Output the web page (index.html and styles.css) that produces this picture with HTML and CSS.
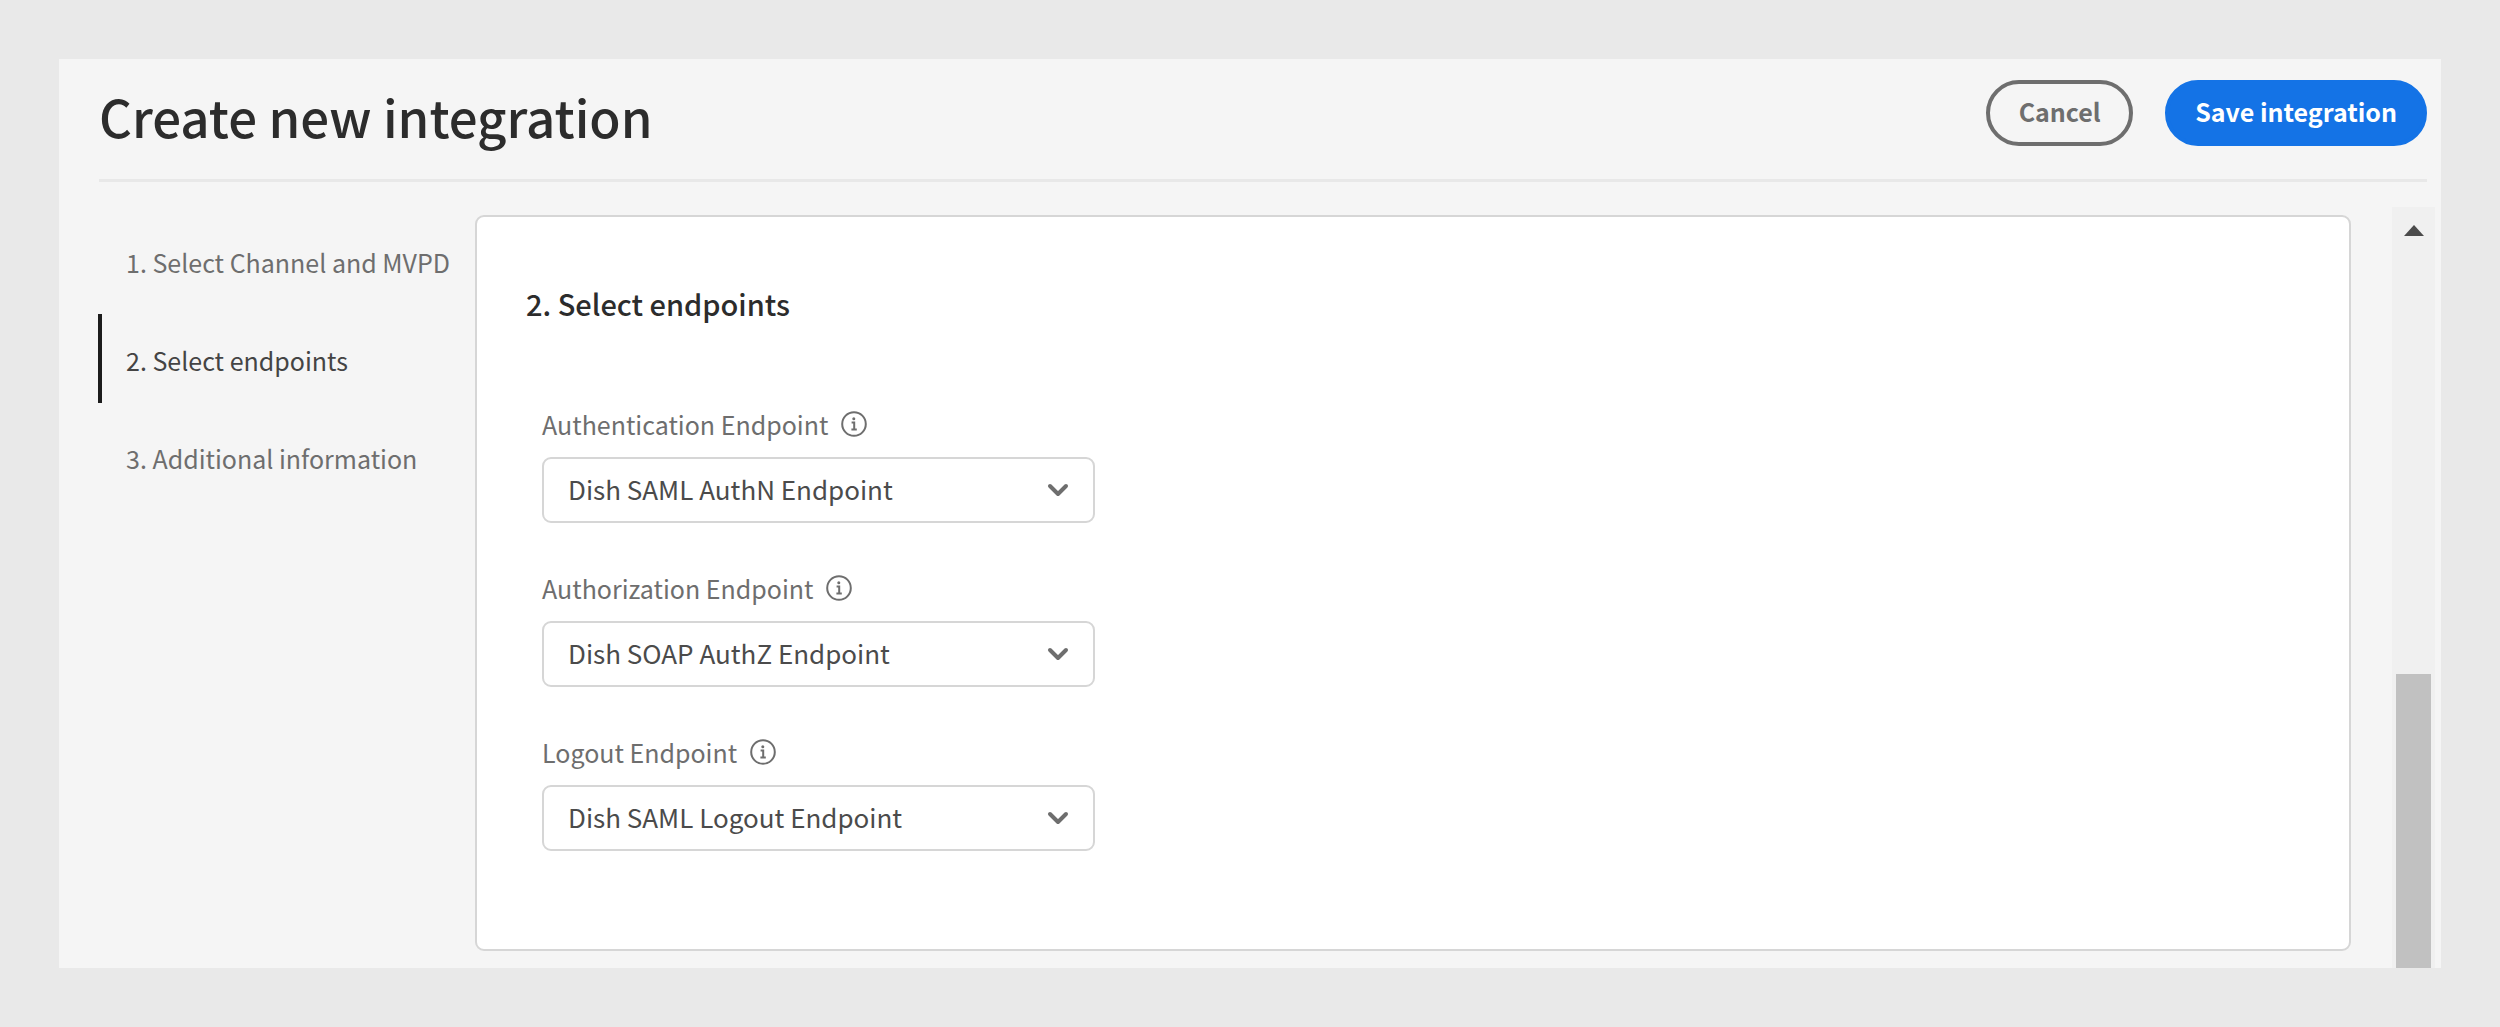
FILE: index.html
```html
<!DOCTYPE html>
<html lang="en">
<head>
<meta charset="utf-8">
<title>Create new integration</title>
<link rel="stylesheet" href="styles.css">
</head>
<body>
<div class="panel">
  <header class="header">
    <h1 class="title">Create new integration</h1>
    <div class="actions">
      <button class="button button-outline" type="button">Cancel</button>
      <button class="button button-primary" type="button">Save integration</button>
    </div>
  </header>
  <div class="content">
    <nav class="steps" aria-label="Steps">
      <a class="step" href="#channel">1. Select Channel and MVPD</a>
      <a class="step step-active" href="#endpoints" aria-current="step">2. Select endpoints</a>
      <a class="step" href="#additional">3. Additional information</a>
    </nav>
    <main class="card" id="endpoints">
      <h2 class="card-title">2. Select endpoints</h2>
      <form class="fields">
        <div class="field">
          <div class="field-head">
            <label for="authn">Authentication Endpoint</label>
            <svg class="info" viewBox="0 0 26 26" aria-hidden="true"><circle cx="13" cy="13" r="11.8"/><circle class="dot" cx="12.8" cy="7.8" r="1.5"/><path d="M10.6 11.4H13.2V18.2M10.4 18.4H15.8"/></svg>
          </div>
          <div class="picker">
            <select id="authn"><option>Dish SAML AuthN Endpoint</option></select>
            <svg class="chevron" viewBox="0 0 22 14" aria-hidden="true"><path d="M3 3L11 11L19 3"/></svg>
          </div>
        </div>
        <div class="field">
          <div class="field-head">
            <label for="authz">Authorization Endpoint</label>
            <svg class="info" viewBox="0 0 26 26" aria-hidden="true"><circle cx="13" cy="13" r="11.8"/><circle class="dot" cx="12.8" cy="7.8" r="1.5"/><path d="M10.6 11.4H13.2V18.2M10.4 18.4H15.8"/></svg>
          </div>
          <div class="picker">
            <select id="authz"><option>Dish SOAP AuthZ Endpoint</option></select>
            <svg class="chevron" viewBox="0 0 22 14" aria-hidden="true"><path d="M3 3L11 11L19 3"/></svg>
          </div>
        </div>
        <div class="field">
          <div class="field-head">
            <label for="logout">Logout Endpoint</label>
            <svg class="info" viewBox="0 0 26 26" aria-hidden="true"><circle cx="13" cy="13" r="11.8"/><circle class="dot" cx="12.8" cy="7.8" r="1.5"/><path d="M10.6 11.4H13.2V18.2M10.4 18.4H15.8"/></svg>
          </div>
          <div class="picker">
            <select id="logout"><option>Dish SAML Logout Endpoint</option></select>
            <svg class="chevron" viewBox="0 0 22 14" aria-hidden="true"><path d="M3 3L11 11L19 3"/></svg>
          </div>
        </div>
      </form>
    </main>
    <div class="scrollbar" aria-hidden="true">
      <svg class="scroll-up" viewBox="0 0 20 11"><path d="M10 0L20 11H0Z"/></svg>
      <div class="scroll-thumb"></div>
    </div>
  </div>
</div>
</body>
</html>
```
FILE: styles.css
```css
* {
  box-sizing: border-box;
}

body {
  margin: 0;
  padding: 59px;
  background: #e9e9e9;
  font-family: "Noto Sans CJK SC", "Noto Sans", sans-serif;
  font-size: 25px;
  line-height: 32px;
  color: #6e6e6e;
}

.panel {
  background: #f5f5f5;
}

.header {
  display: flex;
  justify-content: space-between;
  align-items: flex-start;
  margin: 0 14px 0 40px;
  padding: 21px 0 33px;
  border-bottom: 3px solid #e8e8e8;
}

.title {
  margin: 6px 0 0;
  font-size: 51px;
  line-height: 60px;
  font-weight: 500;
  color: #2c2c2c;
}

.actions {
  display: flex;
  gap: 32px;
}

.button {
  min-width: 147px;
  height: 66px;
  padding: 0 26px 4px;
  border: 4px solid #6e6e6e;
  border-radius: 33px;
  background: transparent;
  font: inherit;
  font-weight: 700;
  color: #6e6e6e;
}

.button-primary {
  border-color: #1473e6;
  background: #1473e6;
  color: #fff;
}

.content {
  display: flex;
  margin: 25px 6px 0 39px;
}

.steps {
  flex: 0 0 377px;
  display: flex;
  flex-direction: column;
  gap: 9px;
  padding-top: 9px;
}

.step {
  display: flex;
  align-items: center;
  height: 89px;
  padding: 2px 0 0 24px;
  border-left: 4px solid transparent;
  color: #6e6e6e;
  text-decoration: none;
  white-space: nowrap;
}

.step-active {
  border-left-color: #1c1c1c;
  color: #444;
}

.card {
  flex: 1;
  margin: 8px 41px 17px 0;
  padding: 66px 49px 98px;
  border: 2px solid #d6d6d6;
  border-radius: 9px;
  background: #fff;
}

.card-title {
  margin: 0;
  font-size: 29px;
  line-height: 40px;
  font-weight: 500;
  color: #2c2c2c;
}

.fields {
  display: flex;
  flex-direction: column;
  gap: 49px;
  padding: 85px 16px 0;
}

.field {
  max-width: 553px;
}

.field-head {
  display: flex;
  align-items: center;
  gap: 13px;
  margin-bottom: 17px;
}

.info {
  width: 26px;
  height: 26px;
  fill: none;
  stroke: #6e6e6e;
  stroke-width: 2;
}

.info .dot {
  fill: #6e6e6e;
  stroke: none;
}

.picker {
  display: grid;
  align-items: center;
}

.picker select {
  grid-area: 1 / 1;
  width: 100%;
  height: 66px;
  padding: 0 24px 2px;
  appearance: none;
  border: 2px solid #d6d6d6;
  border-radius: 9px;
  background: #fff;
  font: inherit;
  font-size: 26px;
  line-height: 40px;
  color: #4b4b4b;
}

.chevron {
  grid-area: 1 / 1;
  justify-self: end;
  width: 22px;
  height: 14px;
  margin-right: 26px;
  fill: none;
  stroke: #6e6e6e;
  stroke-width: 4;
  stroke-linecap: round;
  stroke-linejoin: round;
  pointer-events: none;
}

.scrollbar {
  flex: 0 0 43px;
  display: flex;
  flex-direction: column;
  justify-content: space-between;
  align-items: center;
  padding-top: 18px;
  background: #f0f0f0;
}

.scroll-up {
  width: 20px;
  height: 11px;
  fill: #4b4b4b;
}

.scroll-thumb {
  width: 35px;
  height: 294px;
  background: #c1c1c1;
}
```
